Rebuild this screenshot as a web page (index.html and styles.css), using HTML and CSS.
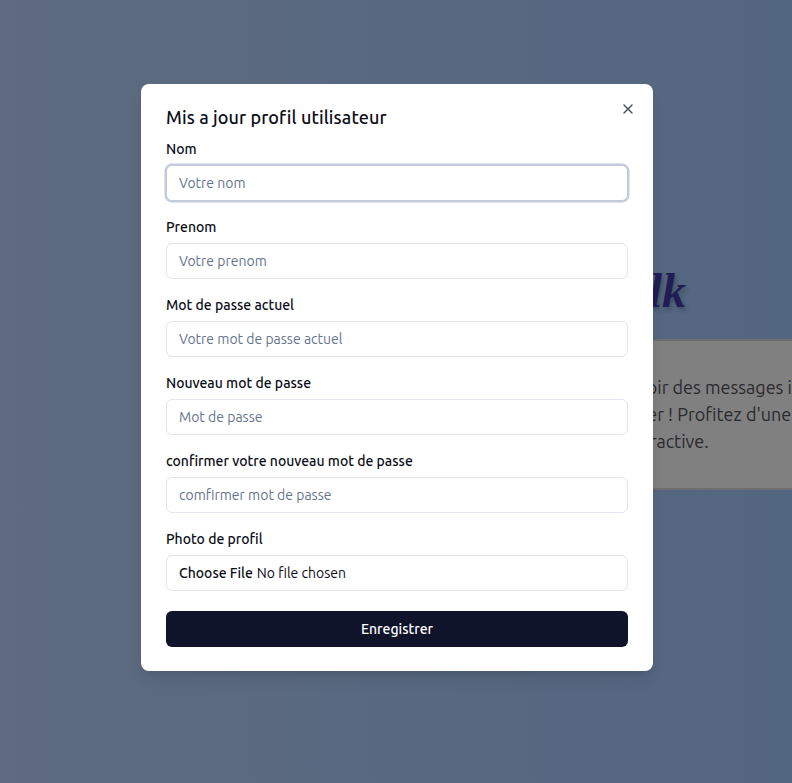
FILE: index.html
```html
<!DOCTYPE html>
<html lang="fr">
<head>
<meta charset="utf-8">
<title>Profil</title>
<link rel="stylesheet" href="styles.css">
</head>
<body>
<main class="page">
  <h1 class="hero-title">ChatTalk</h1>
  <div class="hero-box">
    <p class="hero-line l1">recevoir des messages instantanés</p>
    <p class="hero-line l2">partager ! Profitez d'une expérience</p>
    <p class="hero-line l3">interactive.</p>
  </div>
</main>

<div class="overlay">
  <div class="dialog" role="dialog">
    <button class="close" aria-label="Fermer">
      <svg viewBox="0 0 24 24" width="16" height="16" fill="none" stroke="currentColor" stroke-width="2" stroke-linecap="round" stroke-linejoin="round"><path d="M18 6 6 18"/><path d="m6 6 12 12"/></svg>
    </button>
    <h2 class="dialog-title">Mis a jour profil utilisateur</h2>
    <form class="form">
      <div class="field">
        <label class="label">Nom</label>
        <input class="input focused" type="text" placeholder="Votre nom">
      </div>
      <div class="field">
        <label class="label">Prenom</label>
        <input class="input" type="text" placeholder="Votre prenom">
      </div>
      <div class="field">
        <label class="label">Mot de passe actuel</label>
        <input class="input" type="password" placeholder="Votre mot de passe actuel">
      </div>
      <div class="field">
        <label class="label">Nouveau mot de passe</label>
        <input class="input" type="password" placeholder="Mot de passe">
      </div>
      <div class="field">
        <label class="label">confirmer votre nouveau mot de passe</label>
        <input class="input" type="password" placeholder="comfirmer mot de passe">
      </div>
      <div class="field">
        <label class="label">Photo de profil</label>
        <input class="input file" type="file">
      </div>
      <button class="submit" type="button">Enregistrer</button>
    </form>
  </div>
</div>
</body>
</html>
```

FILE: styles.css
```css
* { box-sizing: border-box; }
html, body { margin: 0; padding: 0; }
body {
  width: 792px;
  height: 783px;
  overflow: hidden;
  font-family: Ubuntu, "Noto Sans", sans-serif;
  background: linear-gradient(90deg, #5e6b80 0%, #586880 50%, #536681 100%);
  position: relative;
}
.page {
  height: 100%;
  padding-top: 263px;
}
.hero-title {
  margin: 0;
  width: 686px;
  text-align: right;
  font-family: "Liberation Serif", serif;
  font-size: 48px;
  line-height: 56px;
  font-style: italic;
  font-weight: 700;
  color: #201d56;
  text-shadow: 2px 3px 4px rgba(0,0,0,0.22);
}
.hero-box {
  margin: 20px 0 0 500px;
  width: 294px;
  height: 151px;
  background: #808080;
  border: 2px solid #6e6e6e;
  border-right: 0;
  padding-top: 33px;
  overflow: hidden;
}
.hero-line {
  margin: 0;
  white-space: nowrap;
  font-size: 18px;
  line-height: 27px;
  color: #2a2a2e;
}
.l1 { padding-left: 101px; }
.l2 { padding-left: 92px; }
.l3 { padding-left: 116px; }

.overlay {
  position: absolute;
  inset: 0;
  display: flex;
  justify-content: center;
  align-items: flex-start;
  padding: 84px 0 0 2px;
}
.dialog {
  position: relative;
  width: 512px;
  background: #fff;
  border-radius: 8px;
  padding: 24px 25px 24px 25px;
  box-shadow: 0 10px 15px -3px rgba(0,0,0,0.1), 0 4px 6px -4px rgba(0,0,0,0.1);
}
.close {
  position: absolute;
  top: 17px;
  right: 17px;
  width: 16px;
  height: 16px;
  padding: 0;
  border: 0;
  background: none;
  color: #4b4f5c;
  display: flex;
}
.dialog-title {
  margin: 0 0 15px;
  font-size: 18px;
  line-height: 18px;
  font-weight: 500;
  letter-spacing: 0.1px;
  color: #0b0d17;
}
.form {
  display: flex;
  flex-direction: column;
}
.field {
  display: flex;
  flex-direction: column;
  gap: 8px;
  margin-bottom: 18px;
}
.field:nth-last-of-type(1) { margin-bottom: 20px; }
.label {
  font-size: 14px;
  line-height: 16px;
  font-weight: 500;
  color: #0b0d17;
}
.input {
  height: 36px;
  width: 100%;
  border: 1px solid #e1e5ef;
  border-radius: 6px;
  padding: 0 12px;
  font-family: inherit;
  font-size: 14px;
  color: #0b0d17;
  background: #fff;
  outline: none;
}
.input::placeholder { color: #66748e; }
.input.focused {
  border-color: #c4cbd8;
  box-shadow: 0 0 0 1.5px #c4cbd8;
}
.input.file {
  padding-top: 9px;
  color: #0b0d17;
}
.input.file::file-selector-button {
  border: 0;
  background: transparent;
  padding: 0;
  margin-right: 4px;
  font-family: inherit;
  font-size: 14px;
  font-weight: 500;
  color: #0b0d17;
}
.submit {
  height: 36px;
  width: 100%;
  border: 0;
  border-radius: 6px;
  background: #10142b;
  color: #fff;
  font-family: inherit;
  font-size: 14px;
  font-weight: 500;
}
```
